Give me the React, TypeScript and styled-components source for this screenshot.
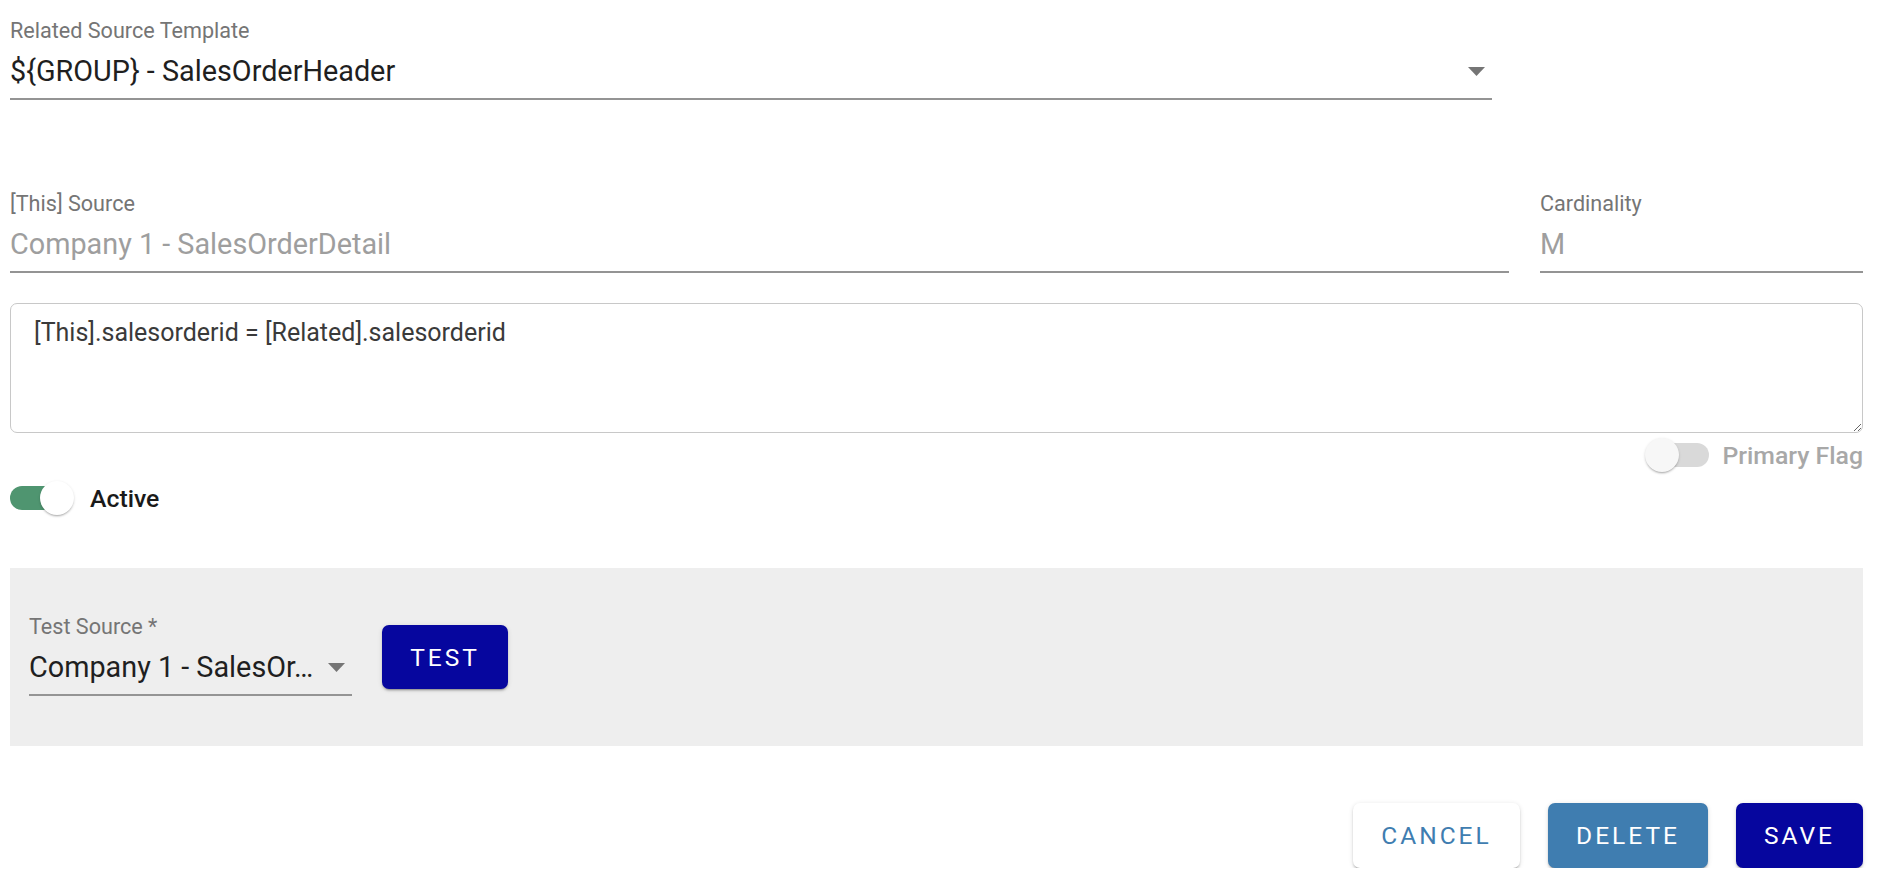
import React from "react";
import styled, { createGlobalStyle } from "styled-components";

const GlobalStyle = createGlobalStyle`
  html, body {
    margin: 0;
    padding: 0;
    background: #ffffff;
    font-family: Roboto, "Noto Sans", Arial, sans-serif;
  }
  * { box-sizing: border-box; }
`;

const Page = styled.div`
  width: 1883px;
  padding: 19px 20px 0 10px;
  display: flex;
  flex-direction: column;
`;

const FieldRow = styled.div<{ $top: number }>`
  display: flex;
  gap: 31px;
  margin-top: ${(p) => p.$top}px;
`;

const Field = styled.div<{ $width?: string }>`
  display: flex;
  flex-direction: column;
  width: ${(p) => p.$width ?? "auto"};
  flex: ${(p) => (p.$width ? "0 0 auto" : "1 1 auto")};
  min-width: 0;
`;

const Label = styled.label`
  font-size: 21.6px;
  line-height: 24px;
  height: 24px;
  color: #757575;
  white-space: nowrap;
`;

const ValueBox = styled.div`
  display: flex;
  align-items: center;
  margin-top: 8px;
  padding-bottom: 7px;
  border-bottom: 2px solid #949494;
  min-width: 0;
`;

const Value = styled.span<{ $disabled?: boolean }>`
  flex: 1 1 auto;
  min-width: 0;
  font-size: 28.8px;
  line-height: 40px;
  height: 40px;
  color: ${(p) => (p.$disabled ? "#9e9e9e" : "#1f1f1f")};
  white-space: nowrap;
`;

const ArrowWrap = styled.span`
  flex: 0 0 auto;
  display: flex;
  align-items: center;
  margin-right: 7px;
`;

const Arrow = () => (
  <ArrowWrap>
    <svg width="17" height="9" viewBox="0 0 17 9">
      <path d="M0 0 L17 0 L8.5 9 Z" fill="#757575" />
    </svg>
  </ArrowWrap>
);

const TextArea = styled.textarea`
  display: block;
  margin-top: 30px;
  width: 100%;
  height: 130px;
  padding: 13px 23px;
  border: 1px solid #c8c8c8;
  border-radius: 7px;
  font-family: Roboto, "Noto Sans", Arial, sans-serif;
  font-size: 25px;
  line-height: 32px;
  color: #3a3a3a;
  background: #ffffff;
  outline: none;
  resize: vertical;
`;

const SwitchRow = styled.div<{ $align: "start" | "end"; $top: number }>`
  display: flex;
  align-items: center;
  justify-content: ${(p) => (p.$align === "end" ? "flex-end" : "flex-start")};
  height: 38px;
  margin-top: ${(p) => p.$top}px;
`;

const Track = styled.span<{ $on: boolean; $gap: number }>`
  position: relative;
  display: inline-block;
  width: 57px;
  height: 24px;
  border-radius: 12px;
  background: ${(p) => (p.$on ? "#4f9570" : "#d9d9d9")};
  margin-right: ${(p) => p.$gap}px;
  flex: 0 0 auto;
`;

const Thumb = styled.span<{ $on: boolean }>`
  position: absolute;
  top: -5px;
  left: ${(p) => (p.$on ? "30px" : "-7px")};
  width: 34px;
  height: 34px;
  border-radius: 50%;
  background: ${(p) => (p.$on ? "#ffffff" : "#f7f7f7")};
  box-shadow: 0 2px 2px -1px rgba(0, 0, 0, 0.25), 0 1px 3px rgba(0, 0, 0, 0.14);
`;

const SwitchLabel = styled.span<{ $disabled?: boolean }>`
  font-size: 24.8px;
  font-weight: 500;
  color: ${(p) => (p.$disabled ? "#a8a8a8" : "#1a1a1a")};
  white-space: nowrap;
`;

const Switch = ({ on, gap }: { on: boolean; gap: number }) => (
  <Track $on={on} $gap={gap}>
    <Thumb $on={on} />
  </Track>
);

const TestPanel = styled.div`
  margin-top: 51px;
  height: 178px;
  background: #eeeeee;
  padding: 47px 19px 0 19px;
  display: flex;
  align-items: flex-start;
  gap: 30px;
`;

const TestValueBox = styled(ValueBox)`
  justify-content: space-between;
`;

const Button = styled.button<{ $variant: "primary" | "secondary" | "outline"; $width: number }>`
  height: 65px;
  width: ${(p) => p.$width}px;
  border: none;
  border-radius: 7px;
  font-family: Roboto, "Noto Sans", Arial, sans-serif;
  font-size: 24.5px;
  font-weight: 400;
  letter-spacing: 3px;
  text-transform: uppercase;
  cursor: pointer;
  background: ${(p) =>
    p.$variant === "primary" ? "#06069e" : p.$variant === "secondary" ? "#3f7db0" : "#ffffff"};
  color: ${(p) => (p.$variant === "outline" ? "#3f7db0" : "#ffffff")};
  box-shadow: 0 3px 1px -2px rgba(0, 0, 0, 0.2), 0 2px 2px 0 rgba(0, 0, 0, 0.14),
    0 1px 5px 0 rgba(0, 0, 0, 0.12);
  flex: 0 0 auto;
`;

const TestButton = styled(Button)`
  margin-top: 10px;
  height: 64px;
`;

const Actions = styled.div`
  display: flex;
  justify-content: flex-end;
  gap: 28px;
  margin-top: 57px;
`;

export default function App() {
  return (
    <>
      <GlobalStyle />
      <Page>
        <Field $width="80%">
          <Label>Related Source Template</Label>
          <ValueBox>
            <Value>{"${GROUP} - SalesOrderHeader"}</Value>
            <Arrow />
          </ValueBox>
        </Field>

        <FieldRow $top={92}>
          <Field>
            <Label>[This] Source</Label>
            <ValueBox>
              <Value $disabled>Company 1 - SalesOrderDetail</Value>
            </ValueBox>
          </Field>
          <Field $width="323px">
            <Label>Cardinality</Label>
            <ValueBox>
              <Value $disabled>M</Value>
            </ValueBox>
          </Field>
        </FieldRow>

        <TextArea readOnly defaultValue="[This].salesorderid = [Related].salesorderid" />

        <SwitchRow $align="end" $top={3}>
          <Switch on={false} gap={13} />
          <SwitchLabel $disabled>Primary Flag</SwitchLabel>
        </SwitchRow>

        <SwitchRow $align="start" $top={5}>
          <Switch on gap={23} />
          <SwitchLabel>Active</SwitchLabel>
        </SwitchRow>

        <TestPanel>
          <Field $width="323px">
            <Label>Test Source *</Label>
            <TestValueBox>
              <Value>Company 1 - SalesOr…</Value>
              <Arrow />
            </TestValueBox>
          </Field>
          <TestButton $variant="primary" $width={126}>
            Test
          </TestButton>
        </TestPanel>

        <Actions>
          <Button $variant="outline" $width={167}>
            Cancel
          </Button>
          <Button $variant="secondary" $width={160}>
            Delete
          </Button>
          <Button $variant="primary" $width={127}>
            Save
          </Button>
        </Actions>
      </Page>
    </>
  );
}
